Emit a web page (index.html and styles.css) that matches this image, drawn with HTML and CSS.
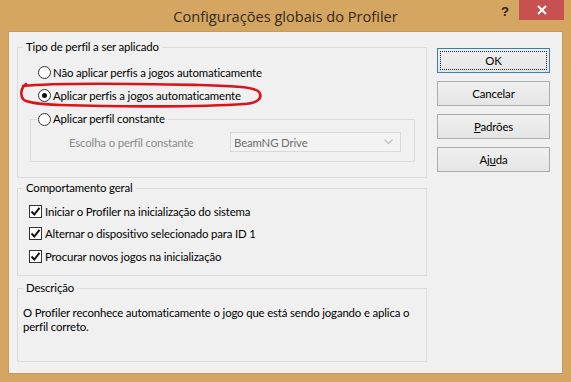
FILE: index.html
```html
<!DOCTYPE html>
<html lang="pt">
<head>
<meta charset="utf-8">
<title>Configurações globais do Profiler</title>
<link rel="stylesheet" href="styles.css">
</head>
<body>
<div class="window">
  <div class="titlebar">
    <div class="tb-side"></div>
    <div class="title">Configurações globais do Profiler</div>
    <div class="tb-side tb-right">
      <span class="help">?</span>
      <span class="close"><svg width="10" height="10" viewBox="0 0 10 10"><path d="M1 1 L9 9 M9 1 L1 9" stroke="#fff" stroke-width="2" fill="none"/></svg></span>
    </div>
  </div>
  <div class="client">
    <div class="main">
      <fieldset class="group g1">
        <legend>Tipo de perfil a ser aplicado</legend>
        <div class="g1-body">
          <div class="opt r1"><span class="radio"></span><span>Não aplicar perfis a jogos automaticamente</span></div>
          <div class="opt r2"><span class="radio checked"></span><span>Aplicar perfis a jogos automaticamente</span></div>
        </div>
        <fieldset class="inner">
          <legend class="opt-legend"><span class="radio"></span><span>Aplicar perfil constante</span></legend>
          <div class="const-row">
            <span class="disabled">Escolha o perfil constante</span>
            <div class="combo"><span>BeamNG Drive</span><svg width="9" height="6" viewBox="0 0 9 6"><path d="M0.5 0.5 L4.5 4.5 L8.5 0.5" stroke="#c3c3c3" stroke-width="1.3" fill="none"/></svg></div>
          </div>
        </fieldset>
      </fieldset>
      <fieldset class="group g2">
        <legend>Comportamento geral</legend>
        <div class="g2-body">
          <div class="chk-row"><span class="check"><svg width="11" height="11" viewBox="0 0 11 11"><path d="M1.5 5.5 L4.3 8.5 L9.5 1.8" stroke="#111" stroke-width="2" fill="none"/></svg></span><span>Iniciar o Profiler na inicialização do sistema</span></div>
          <div class="chk-row"><span class="check"><svg width="11" height="11" viewBox="0 0 11 11"><path d="M1.5 5.5 L4.3 8.5 L9.5 1.8" stroke="#111" stroke-width="2" fill="none"/></svg></span><span>Alternar o dispositivo selecionado para ID 1</span></div>
          <div class="chk-row"><span class="check"><svg width="11" height="11" viewBox="0 0 11 11"><path d="M1.5 5.5 L4.3 8.5 L9.5 1.8" stroke="#111" stroke-width="2" fill="none"/></svg></span><span>Procurar novos jogos na inicialização</span></div>
        </div>
      </fieldset>
      <fieldset class="group g3">
        <legend>Descrição</legend>
        <p class="desc">O Profiler reconhece automaticamente o jogo que está sendo jogando e aplica o perfil correto.</p>
      </fieldset>
    </div>
    <div class="buttons">
      <button class="btn default"><span class="focus">OK</span></button>
      <button class="btn">Cancelar</button>
      <button class="btn"><u>P</u>adrões</button>
      <button class="btn">Aj<u>u</u>da</button>
    </div>
  </div>
  <svg class="annotation" width="571" height="382" viewBox="0 0 571 382">
    <path d="M23 86 C60 82 150 84 200 85 C235 86 255 87 259 92 C263 98 258 103 245 104 C200 107 120 107 60 105 C40 104 26 103 23 99 C20 94 21 88 26 84" stroke="#d8141c" stroke-width="2.6" fill="none" stroke-linecap="round"/>
  </svg>
</div>
</body>
</html>
```
FILE: styles.css
```css
* { box-sizing: border-box; }
html, body { margin: 0; padding: 0; }
body {
  width: 571px;
  height: 382px;
  overflow: hidden;
  font-family: Lato, "Liberation Sans", sans-serif;
  font-size: 11.4px;
  letter-spacing: -0.15px;
  color: #000;
}
.window {
  position: relative;
  width: 571px;
  height: 382px;
  background: #d4a661;
  display: flex;
  flex-direction: column;
}
.titlebar {
  height: 31px;
  display: grid;
  grid-template-columns: 1fr auto 1fr;
  align-items: start;
  letter-spacing: 0;
}
.title {
  font-family: "Open Sans", sans-serif;
  font-size: 14.6px;
  color: #35291a;
  line-height: 31px;
  padding-top: 1px;
}
.tb-right {
  display: flex;
  justify-content: flex-end;
  align-items: flex-start;
  padding-right: 7px;
}
.help {
  font-family: "Liberation Sans", sans-serif;
  font-weight: bold;
  font-size: 13px;
  color: #2a2116;
  margin-top: 4px;
  margin-right: 10px;
}
.close {
  width: 45px;
  height: 20px;
  background: #c75050;
  display: flex;
  align-items: center;
  justify-content: center;
}
.client {
  margin-left: 8px;
  width: 555px;
  height: 343px;
  background: #f0f0f0;
  border: 1px solid #c49a58;
  display: flex;
  padding: 8px 0 0 8px;
  gap: 10px;
}
.main {
  width: 410px;
  display: flex;
  flex-direction: column;
}
fieldset {
  margin: 0;
  border: 1px solid #dcdcdc;
  min-width: 0;
  padding: 0;
}
legend {
  padding: 0 3px;
  margin-left: 5px;
  line-height: 14px;
  height: 14px;
}
.g1 { height: 138px; }
.g1-body { padding: 7px 0 0 20px; }
.g2 { height: 95px; margin-top: 3px; }
.g2-body { padding: 5px 0 0 11px; }
.g3 { height: 81px; margin-top: 5px; }
.opt {
  display: flex;
  align-items: center;
  height: 22px;
  gap: 2px;
}
.r2 { margin-top: 1px; }
.radio {
  width: 13px;
  height: 13px;
  border: 1px solid #333;
  border-radius: 50%;
  background: #fff;
  display: inline-flex;
  align-items: center;
  justify-content: center;
  flex: none;
}
.radio.checked::after {
  content: "";
  width: 5px;
  height: 5px;
  border-radius: 50%;
  background: #111;
}
.inner {
  margin: 5px 11px 0 12px;
  height: 51px;
}
.opt-legend {
  display: flex;
  align-items: center;
  gap: 2px;
  padding: 0 3px 0 1px;
  margin-left: 6px;
  height: 16px;
  line-height: 16px;
}
.const-row {
  display: flex;
  justify-content: space-between;
  align-items: center;
  padding: 5px 13px 0 38px;
}
.disabled { color: #8a8a8a; }
.combo {
  width: 171px;
  height: 20px;
  border: 1px solid #d9d9d9;
  background: #f3f3f3;
  display: flex;
  align-items: center;
  justify-content: space-between;
  padding: 0 7px 0 3px;
  color: #6d6d6d;
}
.chk-row {
  display: flex;
  align-items: center;
  height: 22.5px;
  gap: 3px;
}
.check {
  width: 13px;
  height: 13px;
  border: 1px solid #333;
  background: #fff;
  display: inline-flex;
  align-items: center;
  justify-content: center;
  flex: none;
}
.desc {
  margin: 0;
  padding: 11px 0 0 5px;
  line-height: 14px;
  width: 398px;
}
.buttons {
  width: 113px;
  display: flex;
  flex-direction: column;
  gap: 8px;
  padding-top: 8px;
}
.btn {
  height: 25px;
  width: 113px;
  font-family: inherit;
  font-size: 11.4px;
  letter-spacing: -0.15px;
  color: #000;
  border: 1px solid #acacac;
  background: linear-gradient(#f0f0f0, #e5e5e5);
  padding: 0;
  display: flex;
  align-items: center;
  justify-content: center;
}
.btn.default {
  border-color: #3c7fb1;
  padding: 2px;
  align-items: stretch;
}
.focus {
  flex: 1;
  border: 1px dotted #222;
  display: flex;
  align-items: center;
  justify-content: center;
}
.annotation {
  position: absolute;
  left: 0;
  top: 0;
  pointer-events: none;
}
```
